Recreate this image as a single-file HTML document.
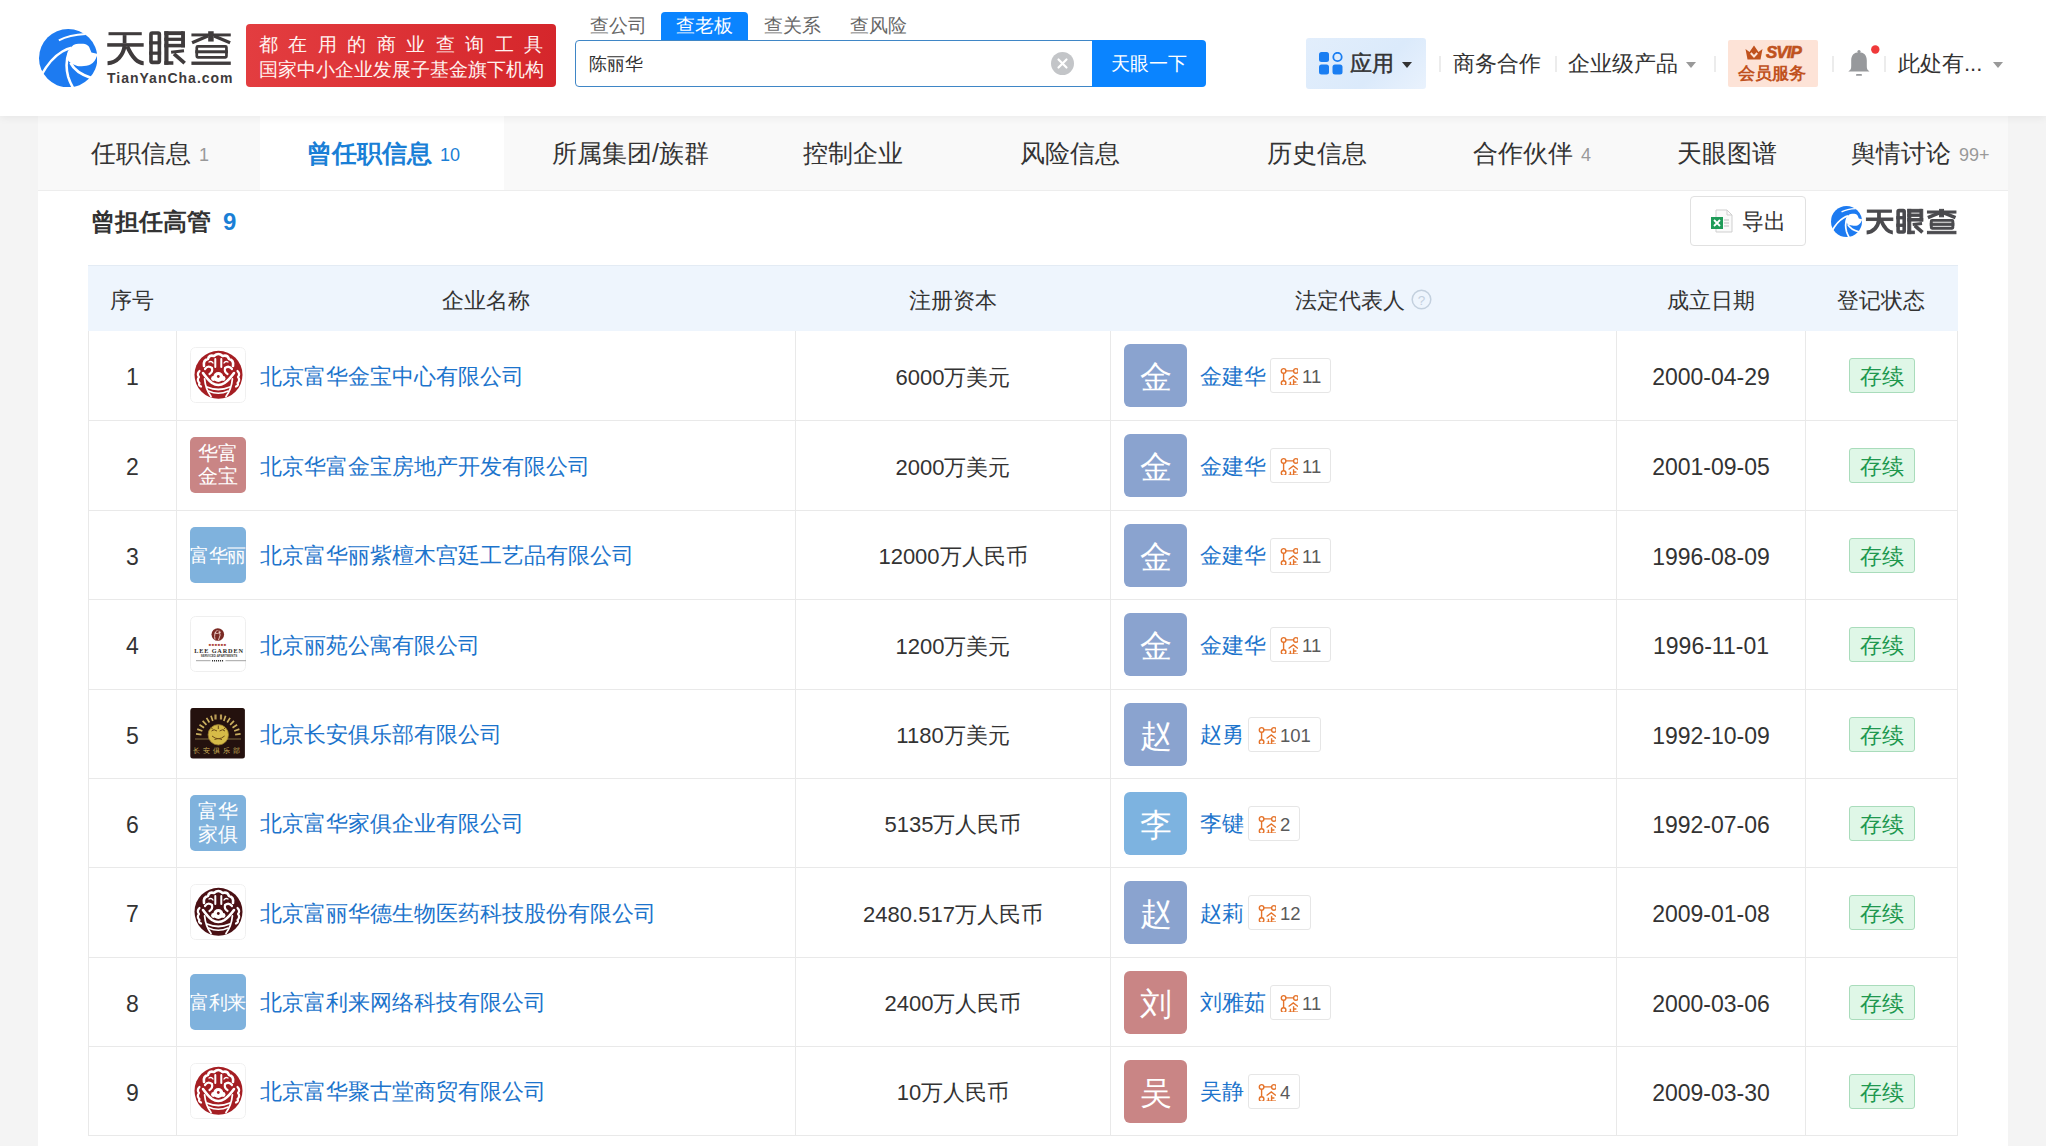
<!DOCTYPE html>
<html><head><meta charset="utf-8">
<style>
*{box-sizing:border-box;margin:0;padding:0}
html,body{width:2046px;height:1146px;overflow:hidden}
body{background:#f4f4f4;font-family:"Liberation Sans",sans-serif;color:#333;position:relative}
.abs{position:absolute}
#hdr{position:absolute;left:0;top:0;width:2046px;height:116px;background:#fff;box-shadow:0 2px 8px rgba(0,0,0,0.06);z-index:2}
.brand{left:109px;top:27px;font-size:36px;font-weight:bold;color:#3e3b3c;letter-spacing:8px;-webkit-text-stroke:0.8px #3e3b3c;line-height:44px;white-space:nowrap}
.brand2{left:107px;top:70px;font-size:14px;font-weight:bold;color:#3e3b3c;letter-spacing:1.0px;line-height:16px;white-space:nowrap}
.banner{left:246px;top:24px;width:310px;height:63px;border-radius:4px;background:linear-gradient(90deg,#e33d40,#d5262b);color:#fff3f0}
.banner .l1{position:absolute;left:13px;top:9px;width:284px;font-size:19px;line-height:24px;text-align:justify;text-align-last:justify;white-space:nowrap;letter-spacing:0}
.banner .l2{position:absolute;left:13px;top:34px;font-size:19px;line-height:24px;white-space:nowrap}
.stab{top:12px;height:28px;font-size:18.5px;line-height:28px;color:#666;white-space:nowrap}
.stab.on{background:#0a84ff;color:#fff;border-radius:4px 4px 0 0;left:661px;width:87px;text-align:center}
.sinput{left:575px;top:40px;width:520px;height:47px;border:1px solid #3f86c6;border-radius:4px 0 0 4px;background:#fff}
.sinput span{position:absolute;left:13px;top:11px;font-size:18px;line-height:24px;color:#333}
.sbtn{left:1092px;top:40px;width:114px;height:47px;background:#0a84ff;border-radius:0 4px 4px 0;color:#fff;font-size:19px;line-height:47px;text-align:center}
.clr{left:1051px;top:52px;width:23px;height:23px;border-radius:50%;background:#c3c5c8}
.nav{font-size:22px;color:#333;line-height:30px;top:49px;white-space:nowrap}
.sep{top:56px;width:2px;height:16px;background:#ececec}
.caret{width:0;height:0;border-left:5px solid transparent;border-right:5px solid transparent;border-top:6px solid #999}
#tabs{position:absolute;left:38px;top:116px;width:1970px;height:75px;background:#f9f9f9;border-bottom:1px solid #ededed}
.tab{top:139px;font-size:25px;line-height:28px;color:#333;white-space:nowrap}
.tab sup{font-size:18px;color:#999;vertical-align:baseline;position:relative;top:-1px;margin-left:8px}
#panel{position:absolute;left:38px;top:191px;width:1970px;height:955px;background:#fff}
.title{left:91px;top:207px;font-size:24px;font-weight:bold;line-height:30px;color:#333;white-space:nowrap}
.title b{color:#1a7fd6;margin-left:12px}
.exp{left:1690px;top:196px;width:116px;height:50px;border:1px solid #e1e1e1;border-radius:4px;background:#fff}
#tbl{position:absolute;left:88px;top:265px;width:1870px}
.th{position:absolute;top:0;height:66px;background:#eef5fd;border-top:1px solid #e3ebf4;width:1870px}
.th div{position:absolute;top:2px;height:66px;line-height:66px;font-size:22px;color:#333;text-align:center;white-space:nowrap}
.row{position:absolute;left:0;width:1870px;height:90px;border-bottom:1px solid #e9e9e9;border-left:1px solid #e9e9e9;border-right:1px solid #e9e9e9}
.row .c{position:absolute;top:0;height:89px;border-right:1px solid #e9e9e9}
.num{font-size:23px;line-height:89px;text-align:center;color:#333;padding-top:2px}
.logo{position:absolute;left:13px;top:16px;width:56px;height:56px;border-radius:5px;overflow:hidden}
.logo.txt{color:#fff;text-align:center;font-size:19.5px;line-height:23px;display:flex;align-items:center;justify-content:center}
.logo.t1{font-size:18.5px;white-space:nowrap;letter-spacing:-0.3px}
.cname{position:absolute;left:83px;top:1px;line-height:89px;font-size:22px;color:#1c74cc;white-space:nowrap}
.cap{font-size:22px;line-height:89px;text-align:center;color:#333;white-space:nowrap;padding-top:2px}
.av{position:absolute;left:13px;top:13px;width:63px;height:63px;border-radius:6px;color:#fff;font-size:32px;line-height:67px;text-align:center}
.pname{position:absolute;left:89px;top:1px;line-height:89px;font-size:22px;color:#1c74cc;white-space:nowrap}
.badge{position:absolute;top:27px;height:35px;border:1px solid #e6e6e6;border-radius:3px;padding:0 9px 0 31px;font-size:18.5px;line-height:36px;color:#5a5a5a;white-space:nowrap}
.badge svg{position:absolute;left:8px;top:8px}
.date{font-size:23px;line-height:89px;text-align:center;color:#333;padding-top:2px}
.tag{position:absolute;left:43px;top:27px;width:66px;height:35px;background:#dff7e7;border:1px solid #a9dcbb;border-radius:3px;color:#20984f;font-size:22px;line-height:35px;text-align:center}
</style></head><body>
<svg width="0" height="0" style="position:absolute">
<defs>
<g id="net" fill="none" stroke="#e5732a" stroke-width="1.4">
  <circle cx="4.6" cy="3.9" r="2.3"/><circle cx="16.9" cy="3.9" r="2.3"/><circle cx="4.6" cy="16.1" r="2.3"/>
  <path d="M6.9 3.9 H14.6 M4.6 6.2 V13.8"/>
  <path d="M9.6 12.6 L14.3 8.9 L18.9 12.6" stroke-width="1.3"/>
  <path d="M14.6 12.2 V18 M11.4 14.8 V18 M14.6 15 H17.4" stroke-width="1.4"/>
  <path d="M9.4 18.2 H19.2" stroke-width="1.6"/>
</g>
<g id="lion">
  <circle cx="28.5" cy="27.8" r="24"/>
  <g fill="none" stroke="#fff" stroke-linecap="round" stroke-linejoin="round">
    <path d="M13 26 Q18 33 22 36 Q28.3 40 34.6 36 Q39 33 44 26" stroke-width="2.6"/>
    <path d="M17 40 Q28.3 45 39.8 40" stroke-width="1.8"/>
    <path d="M18.5 44 Q28.3 48.5 38.1 44" stroke-width="1.6"/>
    <path d="M14.6 32 Q15.5 42 21 49.5" stroke-width="1.8"/>
    <path d="M42.4 32 Q41.5 42 36 49.5" stroke-width="1.8"/>
    <path d="M9.5 24 Q6.5 27 9 30 Q6.5 33 9.5 36 Q8 38 11 39.5" stroke-width="2.2"/>
    <path d="M47.5 24 Q50.5 27 48 30 Q50.5 33 47.5 36 Q49 38 46 39.5" stroke-width="2.2"/>
    <path d="M14 19 Q13 13 18 12 Q19 7.5 24 9 Q28.3 5 32.6 9 Q37.5 7.5 39 12 Q44 13 43 19" stroke-width="2.6"/>
    <path d="M25.3 12 V20 M31.3 12 V20" stroke-width="2"/>
    <path d="M15 22 Q18 18 22 21 Q23 25 19.5 27 M42 22 Q39 18 35 21 Q34 25 37.5 27" stroke-width="2.2"/>
    <path d="M19 15 Q21.5 13.5 23 16 M34 16 Q35.5 13.5 38 15" stroke-width="1.4"/>
  </g>
  <circle cx="28.3" cy="30" r="5" fill="#fff"/>
  <circle cx="23.5" cy="31.5" r="2.4" fill="#fff"/><circle cx="33.1" cy="31.5" r="2.4" fill="#fff"/>
  <circle cx="28.3" cy="29.5" r="1.4"/>
</g>
<g id="lee">
  <rect x="0.5" y="0.5" width="55" height="55" rx="5" fill="#fff" stroke="#efefef"/>
  <circle cx="27.8" cy="18.5" r="6.3" fill="#7a2a24"/>
  <path d="M25 23.5 Q23.5 17 27.5 14 M28.5 24 Q31.5 19 29 14.5 M24.5 17 Q27 18.5 31 16" stroke="#f2d6cf" stroke-width="0.9" fill="none"/>
  <text x="27.8" y="30" font-size="4" text-anchor="middle" fill="#b04a40" font-family="Liberation Serif" letter-spacing="0.6">■■■■■■</text>
  <text x="29" y="37.4" font-size="6.2" text-anchor="middle" fill="#2a2622" font-family="Liberation Serif" font-weight="bold" letter-spacing="0.9">LEE GARDEN</text>
  <text x="29" y="41.4" font-size="3" text-anchor="middle" fill="#4a4540" font-family="Liberation Sans" font-weight="bold">SERVICED APARTMENTS</text>
  <path d="M6 44.7 H20.5 M35.5 44.7 H56" stroke="#999" stroke-width="0.9"/>
  <path d="M22 44.7 H34" stroke="#333" stroke-width="1.4" stroke-dasharray="1.1 0.9"/>
</g>
<g id="club">
  <rect x="0.3" y="2" width="54.6" height="50.6" rx="2.5" fill="#24110e"/>
  <path d="M5 33 H51" stroke="#8a7648" stroke-width="0.9"/>
  <path d="M11.47 28.63 L6.02 27.87 M12.39 25.01 L7.24 23.08 M14.08 21.68 L9.48 18.67 M16.46 18.80 L12.63 14.86 M19.41 16.51 L16.53 11.82 M22.79 14.92 L21.00 9.72 M33.81 14.92 L35.60 9.72 M37.19 16.51 L40.07 11.82 M40.14 18.80 L43.97 14.86 M42.52 21.68 L47.12 18.67 M44.21 25.01 L49.36 23.08 M45.13 28.63 L50.58 27.87" stroke="#c9ae5f" stroke-width="1.7" fill="none"/>
  <path d="M25.5 8.5 V13.5 M31 8.5 V13.5" stroke="#b89a55" stroke-width="2.2"/>
  <circle cx="28.3" cy="28.8" r="10.2" fill="#d6bb48"/>
  <circle cx="28.3" cy="28.8" r="10.2" fill="none" stroke="#9a7e30" stroke-width="0.8"/>
  <path d="M21.5 25 Q24 22.5 27 25 M29.6 25 Q32.6 22.5 35 25 M22 30 Q28.3 35.5 34.6 30 M24.5 33.5 Q28.3 31.5 32 33.5 M20.5 21 L23 23.5 M36 21 L33.5 23.5 M28.3 19.5 V23" stroke="#6a4a18" stroke-width="1" fill="none"/>
  <text x="28" y="47" font-size="6.5" text-anchor="middle" fill="#cdb15a" letter-spacing="3" font-family="Liberation Sans">长安俱乐部</text>
</g>
</defs></svg>

<div id="hdr">
  <!-- logo -->
  <svg class="abs" style="left:38.5px;top:28.7px" width="58.4" height="58.4" viewBox="0 0 100 100"><circle cx="50" cy="50" r="50" fill="#1d7bf1"/>
  <path fill="#fff" d="M54.3 32.5 C58 28 60 26.5 63.5 25.9 C70 25 75 25 78.7 25.9 C83 27 86 30 86.8 33 L89.8 40.1 L102 43 L102 48 L99 46.5 C97 53 94 57 88 61 C82 64 70 65 63.5 62.4 C58 61 52 58 49.2 53.3 C47.5 48 48.5 42 49.2 41.1 C51 37 52.5 34.5 54.3 32.5 Z"/>
  <g fill="none" stroke="#fff" stroke-linecap="butt">
  <path d="M34 19.5 C46 13 60 9.5 80 8.5" stroke-width="3.2"/>
  <path d="M4 79 C14 61 27 46 40 38.5 C46 35 50 33.5 56 32" stroke-width="4.3"/>
  <path d="M52 37 C47 50 45.5 66 50 82 C52.5 90 55.5 96 59 102" stroke-width="4.4"/>
  <path d="M54 58 C60 70 71 78 90 84" stroke-width="4.8"/>
  </g></svg>
  <svg class="abs" style="left:104px;top:28px" width="132" height="40" viewBox="0 0 132 40"><g fill="#3f3b3c"><rect x="4.52" y="4.19" width="33.23" height="3.03"/><rect x="3.23" y="15.16" width="36.45" height="3.55"/><rect x="18.71" y="7.10" width="3.74" height="8.06"/><rect x="46.97" y="5.03" width="8.39" height="29.35" rx="1.29" fill="none" stroke="#3f3b3c" stroke-width="3.61"/><rect x="45.16" y="13.23" width="11.94" height="3.23"/><rect x="45.16" y="23.55" width="11.94" height="3.23"/><rect x="60.32" y="3.23" width="4.19" height="33.55"/><rect x="60.32" y="3.23" width="19.03" height="3.87"/><rect x="77.10" y="3.23" width="3.87" height="16.13"/><rect x="60.32" y="9.68" width="19.03" height="3.23"/><rect x="60.32" y="15.81" width="20.65" height="3.55"/><rect x="60.32" y="33.23" width="9.03" height="3.55"/><rect x="87.42" y="5.48" width="39.35" height="2.90"/><rect x="104.19" y="3.23" width="5.48" height="10.32"/><rect x="92.77" y="18.45" width="29.68" height="10.84" rx="0.97" fill="none" stroke="#3f3b3c" stroke-width="2.71"/><rect x="91.29" y="22.26" width="32.58" height="3.03"/><rect x="87.42" y="33.55" width="39.35" height="3.35"/></g><g fill="none" stroke="#3f3b3c" stroke-linecap="butt"><path d="M20.52 18.06 C19.35 27.10 12.90 34.84 3.55 35.16" stroke-width="4.00"/><path d="M23.23 18.39 C27.10 27.10 32.26 35.16 39.68 35.16" stroke-width="4.00"/><path d="M67.10 24.19 L80.00 22.71" stroke-width="2.90"/><path d="M70.00 25.81 L80.65 35.16" stroke-width="3.74"/><path d="M103.87 8.06 L88.06 14.71" stroke-width="3.35"/><path d="M110.00 8.06 L126.13 14.71" stroke-width="3.35"/></g></svg>
  <div class="abs brand2">TianYanCha.com</div>
  <div class="abs banner"><div class="l1">都在用的商业查询工具</div><div class="l2">国家中小企业发展子基金旗下机构</div></div>
  <div class="abs stab" style="left:590px">查公司</div>
  <div class="abs stab on">查老板</div>
  <div class="abs stab" style="left:764px">查关系</div>
  <div class="abs stab" style="left:850px">查风险</div>
  <div class="abs sinput"><span>陈丽华</span></div>
  <div class="abs clr"><svg width="23" height="23" viewBox="0 0 23 23"><path d="M7.5 7.5 L15.5 15.5 M15.5 7.5 L7.5 15.5" stroke="#fff" stroke-width="2.2" stroke-linecap="round"/></svg></div>
  <div class="abs sbtn">天眼一下</div>
  <!-- right nav -->
  <div class="abs" style="left:1306px;top:38px;width:120px;height:51px;border-radius:3px;background:linear-gradient(135deg,#e2eefc,#dbeafb 60%,#e9f2fd)"></div>
  <svg class="abs" style="left:1319px;top:52px" width="24" height="23" viewBox="0 0 24 23">
    <rect x="0" y="0" width="10" height="10" rx="2.5" fill="#1a7ef2"/>
    <circle cx="18.5" cy="5" r="4.2" fill="none" stroke="#1a7ef2" stroke-width="1.8"/>
    <rect x="0" y="12.5" width="10" height="10" rx="2.5" fill="#1a7ef2"/>
    <rect x="13.5" y="12.5" width="10" height="10" rx="2.5" fill="#1a7ef2"/>
  </svg>
  <div class="abs nav" style="left:1350px;-webkit-text-stroke:0.5px #333">应用</div>
  <div class="abs caret" style="left:1402px;top:62px;border-top-color:#333"></div>
  <div class="abs sep" style="left:1439px"></div>
  <div class="abs nav" style="left:1453px">商务合作</div>
  <div class="abs sep" style="left:1555px"></div>
  <div class="abs nav" style="left:1568px">企业级产品</div>
  <div class="abs caret" style="left:1686px;top:62px"></div>
  <div class="abs sep" style="left:1714px"></div>
  <div class="abs" style="left:1728px;top:40px;width:90px;height:47px;border-radius:2px;background:#fde3d7"></div>
  <svg class="abs" style="left:1744px;top:45px" width="20" height="16" viewBox="0 0 20 16">
    <path d="M1.5 4 L5.5 7 L10 0.5 L14.5 7 L18.5 4 L16.5 14.5 L3.5 14.5 Z" fill="#c0521e"/>
    <path d="M6.8 8 L10 11.5 L13.2 8" stroke="#fde3d7" stroke-width="2" fill="none"/>
  </svg>
  <div class="abs" style="left:1766px;top:42px;font-size:17px;font-weight:bold;font-style:italic;color:#c0521e;line-height:22px;letter-spacing:-1px;-webkit-text-stroke:0.6px #c0521e">SVIP</div>
  <div class="abs" style="left:1738px;top:63px;font-size:17px;font-weight:bold;color:#c0521e;line-height:22px;white-space:nowrap">会员服务</div>
  <div class="abs sep" style="left:1832px"></div>
  <svg class="abs" style="left:1846px;top:44px" width="36" height="34" viewBox="0 0 36 34">
    <path d="M2.3 27.5 H23.5 C21.2 26 20.8 24.5 20.8 22 V16.5 C20.8 11 17.8 8.2 13 8.2 C8.2 8.2 5.2 11 5.2 16.5 V22 C5.2 24.5 4.8 26 2.3 27.5 Z" fill="#97999c"/>
    <circle cx="13" cy="7.6" r="1.6" fill="#97999c"/>
    <rect x="10" y="30" width="6" height="1.8" rx="0.9" fill="#97999c"/>
    <circle cx="29.3" cy="5.5" r="4.2" fill="#f0393a"/>
  </svg>
  <div class="abs sep" style="left:1884px"></div>
  <div class="abs nav" style="left:1898px">此处有...</div>
  <div class="abs caret" style="left:1993px;top:62px"></div>
</div>

<div id="tabs">
  <div class="abs" style="left:222px;top:0;width:244px;height:74px;background:#fff"></div>
</div>
<div class="abs tab" style="left:91px">任职信息<sup>1</sup></div>
<div class="abs tab" style="left:307px;color:#1a7fd6;font-weight:bold">曾任职信息<sup style="color:#1a7fd6;font-weight:normal">10</sup></div>
<div class="abs tab" style="left:552px">所属集团/族群</div>
<div class="abs tab" style="left:803px">控制企业</div>
<div class="abs tab" style="left:1020px">风险信息</div>
<div class="abs tab" style="left:1267px">历史信息</div>
<div class="abs tab" style="left:1473px">合作伙伴<sup>4</sup></div>
<div class="abs tab" style="left:1677px">天眼图谱</div>
<div class="abs tab" style="left:1851px">舆情讨论<sup>99+</sup></div>

<div id="panel"></div>
<div class="abs title">曾担任高管<b>9</b></div>
<div class="abs exp">
  <svg class="abs" style="left:20px;top:12px" width="22" height="24" viewBox="0 0 22 24">
    <path d="M5 1 H16 L21 6 V23 H5 Z" fill="#fafafa" stroke="#cfcfcf" stroke-width="1"/>
    <path d="M16 1 V6 H21" fill="none" stroke="#cfcfcf" stroke-width="1"/>
    <path d="M13 11 H18 M13 14 H18 M13 17 H18" stroke="#bbb" stroke-width="1"/>
    <rect x="0" y="8" width="12" height="12" fill="#1f9b58"/>
    <path d="M3 11 L9 17 M9 11 L3 17" stroke="#fff" stroke-width="1.8"/>
  </svg>
  <div class="abs" style="left:51px;top:10px;font-size:22px;line-height:30px;color:#333">导出</div>
</div>
<svg class="abs" style="left:1831px;top:205.8px" width="31" height="31" viewBox="0 0 100 100"><circle cx="50" cy="50" r="50" fill="#1d7bf1"/>
  <path fill="#fff" d="M54.3 32.5 C58 28 60 26.5 63.5 25.9 C70 25 75 25 78.7 25.9 C83 27 86 30 86.8 33 L89.8 40.1 L102 43 L102 48 L99 46.5 C97 53 94 57 88 61 C82 64 70 65 63.5 62.4 C58 61 52 58 49.2 53.3 C47.5 48 48.5 42 49.2 41.1 C51 37 52.5 34.5 54.3 32.5 Z"/>
  <g fill="none" stroke="#fff" stroke-linecap="butt">
  <path d="M34 19 C46 13 60 9.5 80 8.5" stroke-width="4.5"/>
  <path d="M4 79 C14 61 27 46 40 38.5 C46 35 50 33.5 56 32" stroke-width="5.5"/>
  <path d="M52 37 C47 50 45.5 66 50 82 C52.5 90 55.5 96 59 102" stroke-width="5.5"/>
  <path d="M54 59 C60 70 71 78 90 83.5" stroke-width="5.5"/>
  </g></svg>
<svg class="abs" style="left:1864.2px;top:206.8px" width="95.8" height="29" viewBox="0 0 132 40"><g fill="#4a4a4e" stroke="#4a4a4e" stroke-width="1.3"><rect x="4.52" y="4.19" width="33.23" height="3.03"/><rect x="3.23" y="15.16" width="36.45" height="3.55"/><rect x="18.71" y="7.10" width="3.74" height="8.06"/><rect x="46.97" y="5.03" width="8.39" height="29.35" rx="1.29" fill="none" stroke="#4a4a4e" stroke-width="4.91"/><rect x="45.16" y="13.23" width="11.94" height="3.23"/><rect x="45.16" y="23.55" width="11.94" height="3.23"/><rect x="60.32" y="3.23" width="4.19" height="33.55"/><rect x="60.32" y="3.23" width="19.03" height="3.87"/><rect x="77.10" y="3.23" width="3.87" height="16.13"/><rect x="60.32" y="9.68" width="19.03" height="3.23"/><rect x="60.32" y="15.81" width="20.65" height="3.55"/><rect x="60.32" y="33.23" width="9.03" height="3.55"/><rect x="87.42" y="5.48" width="39.35" height="2.90"/><rect x="104.19" y="3.23" width="5.48" height="10.32"/><rect x="92.77" y="18.45" width="29.68" height="10.84" rx="0.97" fill="none" stroke="#4a4a4e" stroke-width="4.01"/><rect x="91.29" y="22.26" width="32.58" height="3.03"/><rect x="87.42" y="33.55" width="39.35" height="3.35"/></g><g fill="none" stroke="#4a4a4e" stroke-linecap="butt"><path d="M20.52 18.06 C19.35 27.10 12.90 34.84 3.55 35.16" stroke-width="5.30"/><path d="M23.23 18.39 C27.10 27.10 32.26 35.16 39.68 35.16" stroke-width="5.30"/><path d="M67.10 24.19 L80.00 22.71" stroke-width="4.20"/><path d="M70.00 25.81 L80.65 35.16" stroke-width="5.04"/><path d="M103.87 8.06 L88.06 14.71" stroke-width="4.65"/><path d="M110.00 8.06 L126.13 14.71" stroke-width="4.65"/></g></svg>

<div id="tbl">
  <div class="th">
    <div style="left:0;width:88px">序号</div>
    <div style="left:88px;width:619px">企业名称</div>
    <div style="left:707px;width:315px">注册资本</div>
    <div style="left:1022px;width:506px">法定代表人<svg style="margin-left:6px;vertical-align:-2px" width="21" height="21" viewBox="0 0 21 21"><circle cx="10.5" cy="10.5" r="9.3" fill="none" stroke="#c3d0de" stroke-width="1.5"/><text x="10.5" y="15.5" font-size="13.5" text-anchor="middle" fill="#c3d0de" font-family="Liberation Sans">?</text></svg></div>
    <div style="left:1528px;width:189px">成立日期</div>
    <div style="left:1717px;width:152px">登记状态</div>
  </div>
  <div id="rows"><div class="row" style="top:66px;height:90px">
<div class="c num" style="left:0;width:88px;height:89px;line-height:89px">1</div>
<div class="c" style="left:88px;width:619px;height:89px"><div class="logo"><svg width="56" height="56" viewBox="0 0 56 56"><rect x="0.5" y="0.5" width="55" height="55" rx="5" fill="#fff" stroke="#f0f0f0"/><use href="#lion" fill="#a51e23"/></svg></div><div class="cname" style="line-height:89px">北京富华金宝中心有限公司</div></div>
<div class="c cap" style="left:707px;width:315px;height:89px;line-height:89px">6000万美元</div>
<div class="c" style="left:1022px;width:506px;height:89px"><div class="av" style="background:#8aa3cf">金</div><div class="pname" style="line-height:89px">金建华</div><div class="badge" style="left:159px"><svg width="19" height="18" viewBox="0 0 19 18"><use href="#net"/></svg>11</div></div>
<div class="c date" style="left:1528px;width:189px;height:89px;line-height:89px">2000-04-29</div>
<div class="c" style="left:1717px;width:152px;height:89px;border-right:0"><div class="tag">存续</div></div>
</div>
<div class="row" style="top:156px;height:90px">
<div class="c num" style="left:0;width:88px;height:89px;line-height:89px">2</div>
<div class="c" style="left:88px;width:619px;height:89px"><div class="logo txt" style="background:#c98585">华富<br>金宝</div><div class="cname" style="line-height:89px">北京华富金宝房地产开发有限公司</div></div>
<div class="c cap" style="left:707px;width:315px;height:89px;line-height:89px">2000万美元</div>
<div class="c" style="left:1022px;width:506px;height:89px"><div class="av" style="background:#8aa3cf">金</div><div class="pname" style="line-height:89px">金建华</div><div class="badge" style="left:159px"><svg width="19" height="18" viewBox="0 0 19 18"><use href="#net"/></svg>11</div></div>
<div class="c date" style="left:1528px;width:189px;height:89px;line-height:89px">2001-09-05</div>
<div class="c" style="left:1717px;width:152px;height:89px;border-right:0"><div class="tag">存续</div></div>
</div>
<div class="row" style="top:246px;height:89px">
<div class="c num" style="left:0;width:88px;height:88px;line-height:88px">3</div>
<div class="c" style="left:88px;width:619px;height:88px"><div class="logo txt t1" style="background:#7fb2dd">富华丽</div><div class="cname" style="line-height:88px">北京富华丽紫檀木宫廷工艺品有限公司</div></div>
<div class="c cap" style="left:707px;width:315px;height:88px;line-height:88px">12000万人民币</div>
<div class="c" style="left:1022px;width:506px;height:88px"><div class="av" style="background:#8aa3cf">金</div><div class="pname" style="line-height:88px">金建华</div><div class="badge" style="left:159px"><svg width="19" height="18" viewBox="0 0 19 18"><use href="#net"/></svg>11</div></div>
<div class="c date" style="left:1528px;width:189px;height:88px;line-height:88px">1996-08-09</div>
<div class="c" style="left:1717px;width:152px;height:88px;border-right:0"><div class="tag">存续</div></div>
</div>
<div class="row" style="top:335px;height:90px">
<div class="c num" style="left:0;width:88px;height:89px;line-height:89px">4</div>
<div class="c" style="left:88px;width:619px;height:89px"><div class="logo"><svg width="56" height="56" viewBox="0 0 56 56"><use href="#lee"/></svg></div><div class="cname" style="line-height:89px">北京丽苑公寓有限公司</div></div>
<div class="c cap" style="left:707px;width:315px;height:89px;line-height:89px">1200万美元</div>
<div class="c" style="left:1022px;width:506px;height:89px"><div class="av" style="background:#8aa3cf">金</div><div class="pname" style="line-height:89px">金建华</div><div class="badge" style="left:159px"><svg width="19" height="18" viewBox="0 0 19 18"><use href="#net"/></svg>11</div></div>
<div class="c date" style="left:1528px;width:189px;height:89px;line-height:89px">1996-11-01</div>
<div class="c" style="left:1717px;width:152px;height:89px;border-right:0"><div class="tag">存续</div></div>
</div>
<div class="row" style="top:425px;height:89px">
<div class="c num" style="left:0;width:88px;height:88px;line-height:88px">5</div>
<div class="c" style="left:88px;width:619px;height:88px"><div class="logo"><svg width="56" height="56" viewBox="0 0 56 56"><use href="#club"/></svg></div><div class="cname" style="line-height:88px">北京长安俱乐部有限公司</div></div>
<div class="c cap" style="left:707px;width:315px;height:88px;line-height:88px">1180万美元</div>
<div class="c" style="left:1022px;width:506px;height:88px"><div class="av" style="background:#8aa3cf">赵</div><div class="pname" style="line-height:88px">赵勇</div><div class="badge" style="left:137px"><svg width="19" height="18" viewBox="0 0 19 18"><use href="#net"/></svg>101</div></div>
<div class="c date" style="left:1528px;width:189px;height:88px;line-height:88px">1992-10-09</div>
<div class="c" style="left:1717px;width:152px;height:88px;border-right:0"><div class="tag">存续</div></div>
</div>
<div class="row" style="top:514px;height:89px">
<div class="c num" style="left:0;width:88px;height:88px;line-height:88px">6</div>
<div class="c" style="left:88px;width:619px;height:88px"><div class="logo txt" style="background:#7fb2dd">富华<br>家俱</div><div class="cname" style="line-height:88px">北京富华家俱企业有限公司</div></div>
<div class="c cap" style="left:707px;width:315px;height:88px;line-height:88px">5135万人民币</div>
<div class="c" style="left:1022px;width:506px;height:88px"><div class="av" style="background:#7db3e0">李</div><div class="pname" style="line-height:88px">李键</div><div class="badge" style="left:137px"><svg width="19" height="18" viewBox="0 0 19 18"><use href="#net"/></svg>2</div></div>
<div class="c date" style="left:1528px;width:189px;height:88px;line-height:88px">1992-07-06</div>
<div class="c" style="left:1717px;width:152px;height:88px;border-right:0"><div class="tag">存续</div></div>
</div>
<div class="row" style="top:603px;height:90px">
<div class="c num" style="left:0;width:88px;height:89px;line-height:89px">7</div>
<div class="c" style="left:88px;width:619px;height:89px"><div class="logo"><svg width="56" height="56" viewBox="0 0 56 56"><rect x="0.5" y="0.5" width="55" height="55" rx="5" fill="#fff" stroke="#f0f0f0"/><use href="#lion" fill="#4a1014"/></svg></div><div class="cname" style="line-height:89px">北京富丽华德生物医药科技股份有限公司</div></div>
<div class="c cap" style="left:707px;width:315px;height:89px;line-height:89px">2480.517万人民币</div>
<div class="c" style="left:1022px;width:506px;height:89px"><div class="av" style="background:#8aa3cf">赵</div><div class="pname" style="line-height:89px">赵莉</div><div class="badge" style="left:137px"><svg width="19" height="18" viewBox="0 0 19 18"><use href="#net"/></svg>12</div></div>
<div class="c date" style="left:1528px;width:189px;height:89px;line-height:89px">2009-01-08</div>
<div class="c" style="left:1717px;width:152px;height:89px;border-right:0"><div class="tag">存续</div></div>
</div>
<div class="row" style="top:693px;height:89px">
<div class="c num" style="left:0;width:88px;height:88px;line-height:88px">8</div>
<div class="c" style="left:88px;width:619px;height:88px"><div class="logo txt t1" style="background:#7fb2dd">富利来</div><div class="cname" style="line-height:88px">北京富利来网络科技有限公司</div></div>
<div class="c cap" style="left:707px;width:315px;height:88px;line-height:88px">2400万人民币</div>
<div class="c" style="left:1022px;width:506px;height:88px"><div class="av" style="background:#c98585">刘</div><div class="pname" style="line-height:88px">刘雅茹</div><div class="badge" style="left:159px"><svg width="19" height="18" viewBox="0 0 19 18"><use href="#net"/></svg>11</div></div>
<div class="c date" style="left:1528px;width:189px;height:88px;line-height:88px">2000-03-06</div>
<div class="c" style="left:1717px;width:152px;height:88px;border-right:0"><div class="tag">存续</div></div>
</div>
<div class="row" style="top:782px;height:89px">
<div class="c num" style="left:0;width:88px;height:88px;line-height:88px">9</div>
<div class="c" style="left:88px;width:619px;height:88px"><div class="logo"><svg width="56" height="56" viewBox="0 0 56 56"><rect x="0.5" y="0.5" width="55" height="55" rx="5" fill="#fff" stroke="#f0f0f0"/><use href="#lion" fill="#a51e23"/></svg></div><div class="cname" style="line-height:88px">北京富华聚古堂商贸有限公司</div></div>
<div class="c cap" style="left:707px;width:315px;height:88px;line-height:88px">10万人民币</div>
<div class="c" style="left:1022px;width:506px;height:88px"><div class="av" style="background:#c98585">吴</div><div class="pname" style="line-height:88px">吴静</div><div class="badge" style="left:137px"><svg width="19" height="18" viewBox="0 0 19 18"><use href="#net"/></svg>4</div></div>
<div class="c date" style="left:1528px;width:189px;height:88px;line-height:88px">2009-03-30</div>
<div class="c" style="left:1717px;width:152px;height:88px;border-right:0"><div class="tag">存续</div></div>
</div></div><!--rows-->
</div>
</body></html>
